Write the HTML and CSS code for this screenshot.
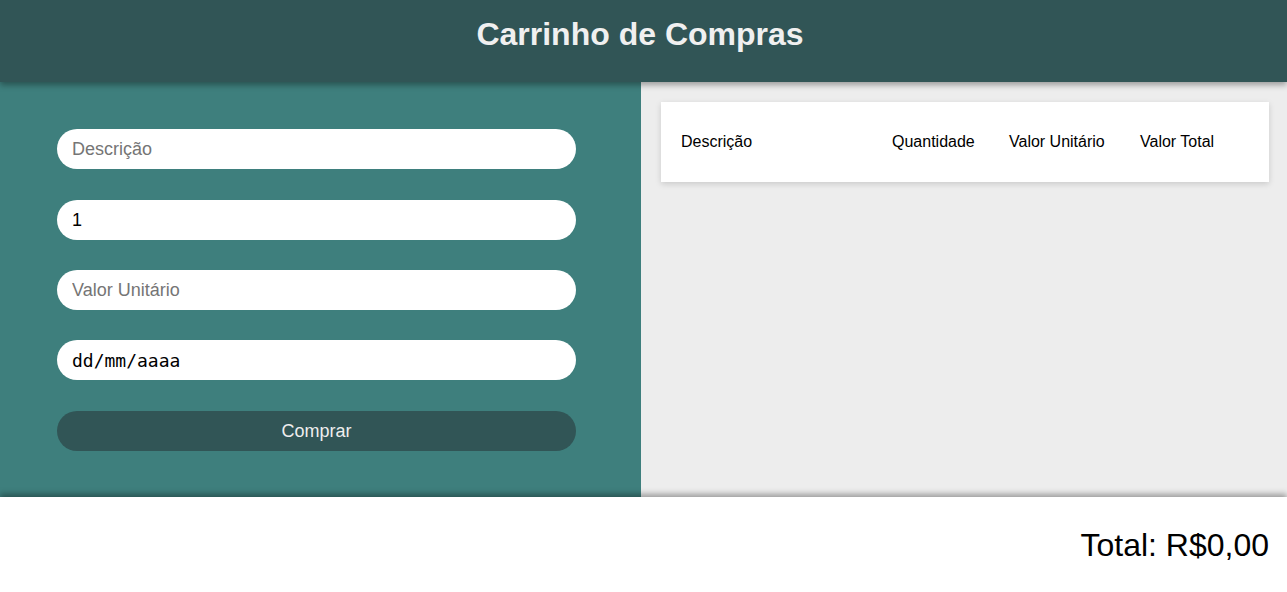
FILE: index.html
```html
<!DOCTYPE html>
<html lang="pt-BR">
<head>
<meta charset="utf-8">
<title>Carrinho de Compras</title>
<link rel="stylesheet" href="styles.css">
</head>
<body>
<header class="topbar">
  <h1 class="title">Carrinho de Compras</h1>
</header>
<main class="main">
  <section class="form-panel">
    <form class="form">
      <input class="field" type="text" placeholder="Descrição">
      <input class="field" type="text" value="1">
      <input class="field" type="text" placeholder="Valor Unitário">
      <input class="field field-date" type="text" placeholder="dd/mm/aaaa">
      <button class="buy" type="button">Comprar</button>
    </form>
  </section>
  <section class="list-panel">
    <div class="card">
      <div class="row-head">
        <span>Descrição</span>
        <span>Quantidade</span>
        <span>Valor Unitário</span>
        <span>Valor Total</span>
      </div>
    </div>
  </section>
</main>
<footer class="footer">
  <p class="total">Total: R$0,00</p>
</footer>
</body>
</html>
```
FILE: styles.css
```css
* { box-sizing: border-box; }
html, body { margin: 0; padding: 0; }
body {
  font-family: "Liberation Sans", Arial, sans-serif;
  background: #fff;
  width: 1287px;
  height: 592px;
  overflow: hidden;
  display: flex;
  flex-direction: column;
}
.topbar {
  height: 82px;
  background: #315556;
  display: flex;
  align-items: center;
  justify-content: center;
  padding-right: 7px;
  position: relative;
  z-index: 2;
  box-shadow: 0 3px 6px rgba(0,0,0,0.35);
}
.title {
  margin: 0;
  color: #f0f0f0;
  font-size: 32px;
  font-weight: bold;
  transform: translateY(-7px);
}
.main {
  height: 415px;
  display: grid;
  grid-template-columns: 641px 1fr;
  position: relative;
  z-index: 1;
}
.form-panel {
  background: #3e7f7d;
  padding: 47px 0 0 57px;
}
.form {
  display: flex;
  flex-direction: column;
  gap: 31px;
  width: 519px;
}
.form .field:nth-child(3), .form .field:nth-child(4) { margin-top: -1px; }
.field {
  height: 40px;
  border: none;
  border-radius: 20px;
  background: #fff;
  padding: 0 15px;
  font-family: "Liberation Sans", Arial, sans-serif;
  font-size: 18px;
  color: #000;
  outline: none;
}
.field::placeholder { color: #757575; }
.field-date {
  font-family: "DejaVu Sans Mono", "Liberation Mono", monospace;
  font-size: 18px;
}
.field-date::placeholder { color: #000; }
.buy {
  height: 40px;
  border: none;
  border-radius: 20px;
  background: #315556;
  color: #eee;
  font-family: "Liberation Sans", Arial, sans-serif;
  font-size: 18px;
}
.list-panel {
  background: #ededed;
  padding: 20px 18px 0 20px;
}
.card {
  background: #fff;
  height: 80px;
  box-shadow: 0 2px 6px rgba(0,0,0,0.15);
  display: flex;
  align-items: center;
  padding-left: 20px;
}
.row-head {
  display: grid;
  grid-template-columns: 211px 117px 131px auto;
  font-size: 16px;
  color: #000;
}
.footer {
  flex: 1;
  background: #fff;
  position: relative;
  z-index: 2;
  box-shadow: 0 -3px 6px rgba(0,0,0,0.35);
  display: flex;
  justify-content: flex-end;
  padding: 30px 18px 0 0;
}
.total {
  margin: 0;
  font-size: 32px;
  color: #000;
}
```
